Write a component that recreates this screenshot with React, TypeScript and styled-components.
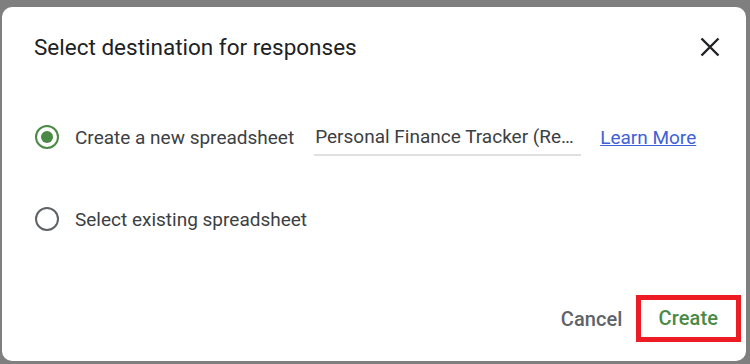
import React, { useState } from 'react';
import styled, { createGlobalStyle } from 'styled-components';

const GlobalStyle = createGlobalStyle`
  html, body {
    margin: 0;
    padding: 0;
    background: #7f7f7f;
    font-family: Roboto, "Liberation Sans", Arial, sans-serif;
  }
`;

const Radio = ({ checked }: { checked: boolean }) => (
  <RadioIcon width="24" height="24" viewBox="0 0 24 24">
    <circle
      cx="12"
      cy="12"
      r="11"
      fill="none"
      stroke={checked ? '#4a8a44' : '#5f6368'}
      strokeWidth="2"
    />
    {checked && <circle cx="12" cy="12" r="6" fill="#4a8a44" />}
  </RadioIcon>
);

const App = (): JSX.Element => {
  const [mode, setMode] = useState<'new' | 'existing'>('new');

  return (
    <Page>
      <GlobalStyle />
      <Dialog>
        <Header>
          <Title>Select destination for responses</Title>
          <CloseButton aria-label="Close">
            <svg width="24" height="24" viewBox="0 0 24 24">
              <path
                d="M3.5 3.5 L20.5 20.5 M20.5 3.5 L3.5 20.5"
                stroke="#202124"
                strokeWidth="2.4"
                fill="none"
              />
            </svg>
          </CloseButton>
        </Header>

        <Body>
          <Row onClick={() => setMode('new')}>
            <Radio checked={mode === 'new'} />
            <Label>Create a new spreadsheet</Label>
            <NameInput>Personal Finance Tracker (Responses)</NameInput>
            <LearnMore href="#">Learn More</LearnMore>
          </Row>
          <Row onClick={() => setMode('existing')}>
            <Radio checked={mode === 'existing'} />
            <Label>Select existing spreadsheet</Label>
          </Row>
        </Body>

        <Footer>
          <TextButton>Cancel</TextButton>
          <TextButton $primary $highlight>
            Create
          </TextButton>
        </Footer>
      </Dialog>
    </Page>
  );
};

const Page = styled.div`
  padding: 7px 0 0 2px;
`;

const Dialog = styled.div`
  width: 744px;
  height: 354px;
  background: #fff;
  border-radius: 10px;
  display: flex;
  flex-direction: column;
  box-sizing: border-box;
`;

const Header = styled.div`
  height: 80px;
  display: flex;
  align-items: center;
  justify-content: space-between;
  padding: 0 24px 0 32px;
`;

const Title = styled.div`
  font-size: 22.5px;
  color: #202124;
`;

const CloseButton = styled.button`
  border: none;
  background: none;
  padding: 0;
  width: 24px;
  height: 24px;
  display: flex;
  cursor: pointer;
`;

const Body = styled.div`
  display: flex;
  flex-direction: column;
  gap: 34px;
  padding: 26px 0 0 33px;
`;

const Row = styled.div`
  height: 48px;
  display: flex;
  align-items: center;
  cursor: pointer;
`;

const RadioIcon = styled.svg`
  flex-shrink: 0;
  margin-right: 16px;
`;

const Label = styled.span`
  font-size: 19px;
  color: #3c4043;
  white-space: nowrap;
  flex-shrink: 0;
`;

const NameInput = styled.div`
  margin-left: 20px;
  width: 267px;
  box-sizing: border-box;
  padding: 0 4px 6px 1px;
  margin-top: 6px;
  border-bottom: 2px solid #e0e0e0;
  font-size: 19px;
  color: #3c4043;
  white-space: nowrap;
  overflow: hidden;
  text-overflow: ellipsis;
`;

const LearnMore = styled.a`
  display: block;
  margin-left: 19px;
  font-size: 19px;
  color: #3f61d6;
  text-decoration: underline;
`;

const Footer = styled.div`
  margin-top: auto;
  display: flex;
  justify-content: flex-end;
  align-items: center;
  gap: 13px;
  padding: 0 5px 19px 0;
`;

const TextButton = styled.button<{ $primary?: boolean; $highlight?: boolean }>`
  background: none;
  font-family: inherit;
  font-size: 20px;
  font-weight: 500;
  letter-spacing: 0.1px;
  color: ${(p) => (p.$primary ? '#4a8a44' : '#5f6368')};
  border: ${(p) => (p.$highlight ? '5px solid #ed1c24' : 'none')};
  padding: ${(p) => (p.$highlight ? '0 18px 2px' : '0')};
  height: ${(p) => (p.$highlight ? '47px' : 'auto')};
  box-sizing: border-box;
  cursor: pointer;
`;

export default App;
